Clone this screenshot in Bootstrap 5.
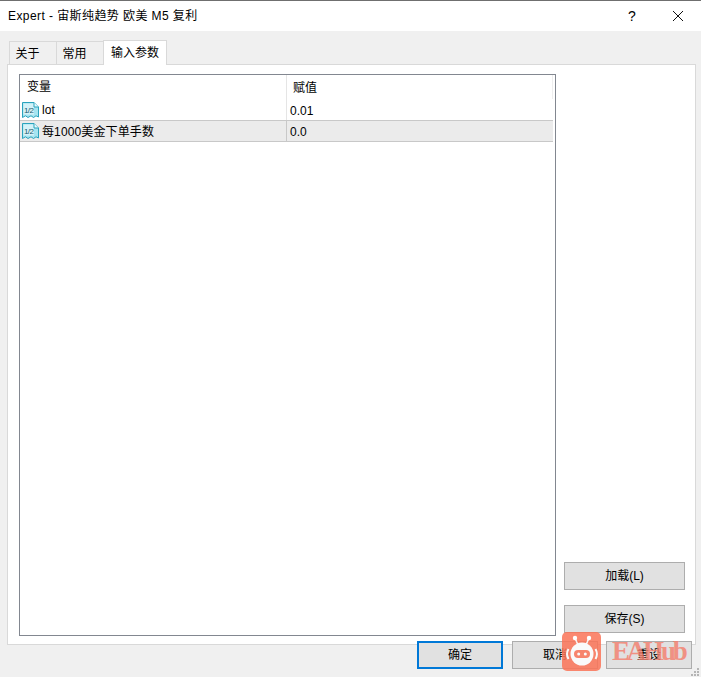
<!DOCTYPE html>
<html lang="zh">
<head>
<meta charset="utf-8">
<title>Expert</title>
<link href="https://cdn.jsdelivr.net/npm/bootstrap@5.3.0/dist/css/bootstrap.min.css" rel="stylesheet">
<style>
html,body{height:100%;margin:0}
body{background:#f0f0f0;font-family:"Liberation Sans","Noto Sans CJK SC",sans-serif;font-size:12px;color:#000;overflow:hidden}
.dlg{width:701px;height:677px;position:relative;border-top:1px solid #6f6f6f}
.titlebar{height:30px;background:#fff;padding-left:8px;font-size:12px;line-height:30px}
.titlebar .ttl{flex:1;letter-spacing:.42px}
.tbtn{width:46px;height:30px;display:flex;align-items:center;justify-content:center;font-size:14px}
.tabstrip{height:33px;padding:9px 0 0 9px;align-items:flex-end}
.tabi{width:48px;height:23px;background:#f0f0f0;border:1px solid #d9d9d9;border-bottom:0;text-align:center;line-height:24px;padding-right:11px;margin-right:-1px}
.tabi.cur{width:64px;height:25px;background:#fff;line-height:24px;padding-right:0;position:relative;z-index:2;margin-bottom:-1px}
.pane{margin-left:7px;width:689px;height:581px;background:#fff;border:1px solid #d9d9d9;padding:9px 0 0 11px}
.plist{width:537px;height:562px;border:1px solid #828790;background:#fff;flex:none}
.hrow{height:24px;line-height:26px}
.drow{height:21px;line-height:21px;width:533px}
.drow.sel{background:#ebebeb;border-top:1px solid #c8c8c8;border-bottom:1px solid #c8c8c8;height:22px;line-height:20px}
.c1{width:266px;flex:none;display:flex;align-items:center;padding-left:2px;letter-spacing:.12px}
.c2{flex:1;padding-left:3px;border-left:1px solid #e5e5e5}
.drow .c1,.drow .c2{padding-top:2px}
.drow.sel .c1,.drow.sel .c2{padding-top:1px}
.sel .c2{border-left-color:#c8c8c8}
.hrow .c1{padding-left:7px}
.hrow .c2{padding-left:6px;border-left-color:#e5e5e5}
.hrow{width:533px;border-right:1px solid #eee}
.vic{width:17px;height:17px;margin-right:3px;flex:none}
.side{width:121px;margin-left:8px;height:559px;gap:15px}
.wbtn{background:#e1e1e1;border:1px solid #adadad;border-radius:0;padding:0;color:#000;font-size:12px;height:28px;line-height:26px;display:block}
.wbtn:hover{background:#e1e1e1;border-color:#adadad;color:#000}
.side .wbtn{width:121px}
.foot{margin-top:-4px;padding-left:417px;gap:8px;position:relative;z-index:1}
.foot .wbtn{width:86px}
.foot .wbtn.pri{border:2px solid #0078d7;line-height:24px;margin-right:1px}
.wmark{position:absolute;left:562px;top:631px;display:flex;align-items:center;z-index:5;opacity:.85}
.wtext{font-family:"Liberation Serif",serif;font-weight:700;font-size:27px;color:#f4806e;margin-left:11px;letter-spacing:-3.200px;line-height:39px;opacity:.95}
.grip{position:absolute;right:2px;bottom:1px}
</style>
</head>
<body>
<div class="dlg">
  <svg width="0" height="0" class="d-block">
    <defs>
      <symbol id="vicon" viewBox="0 0 17 17">
        <path d="M.5.500H12L16.500 5V15L14 13.800L11.500 15.500L9 13.800L6 15.500L3.500 13.800L.5 15.500Z" fill="#a6e4f0" stroke="#2aa3bd"/>
        <rect x="1.500" y="1.500" width="10.500" height="11" fill="#d4f2f8"/>
        <path d="M12 .5V5H16.500" fill="#eafafd" stroke="#2aa3bd"/>
        <text x="2" y="10.500" font-size="8" font-family="Liberation Sans" letter-spacing="-.6" fill="#17586c">1/2</text>
      </symbol>
    </defs>
  </svg>
  <div class="titlebar d-flex">
    <div class="ttl">Expert - 宙斯纯趋势 欧美 M5 复利</div>
    <div class="tbtn">?</div>
    <div class="tbtn"><svg width="12" height="12" viewBox="0 0 12 12"><path d="M1 1L11 11M11 1L1 11" stroke="#111" stroke-width="1" fill="none"/></svg></div>
  </div>
  <div class="tabstrip d-flex">
    <div class="tabi">关于</div>
    <div class="tabi">常用</div>
    <div class="tabi cur">输入参数</div>
  </div>
  <div class="pane d-flex">
    <div class="plist">
      <div class="hrow d-flex"><div class="c1">变量</div><div class="c2">赋值</div></div>
      <div class="drow d-flex">
        <div class="c1"><svg class="vic"><use href="#vicon"/></svg>lot</div>
        <div class="c2">0.01</div>
      </div>
      <div class="drow sel d-flex">
        <div class="c1"><svg class="vic"><use href="#vicon"/></svg>每1000美金下单手数</div>
        <div class="c2">0.0</div>
      </div>
    </div>
    <div class="side d-flex flex-column justify-content-end">
      <button type="button" class="btn wbtn">加载(L)</button>
      <button type="button" class="btn wbtn">保存(S)</button>
    </div>
  </div>
  <div class="foot d-flex">
    <button type="button" class="btn wbtn pri">确定</button>
    <button type="button" class="btn wbtn">取消</button>
    <button type="button" class="btn wbtn">重设</button>
  </div>
  <div class="wmark">
    <svg width="39" height="39" viewBox="0 0 39 39">
      <rect width="39" height="39" rx="5" fill="#fb7458"/>
      <path d="M16 13L13 6M24 13L27 6" stroke="#fff" stroke-width="1.500"/>
      <circle cx="13" cy="6" r="2.200" fill="#fff"/><circle cx="27" cy="6" r="2.200" fill="#fff"/>
      <path d="M6.500 17Q3.500 22 6.500 27M33.500 17Q36.500 22 33.500 27" stroke="#fff" stroke-width="2" fill="none"/>
      <circle cx="20" cy="22" r="11.500" fill="#fff"/>
      <rect x="12" y="18" width="16" height="8" rx="4" fill="#fb7458"/>
      <circle cx="16.700" cy="22" r="1.500" fill="#fff"/><circle cx="23.300" cy="22" r="1.500" fill="#fff"/>
    </svg>
    <span class="wtext">EAHub</span>
  </div>
  <svg class="grip" width="8" height="8" viewBox="0 0 8 8" fill="#b5b5b5">
    <rect x="6" y="0" width="2" height="2"/><rect x="3" y="3" width="2" height="2"/><rect x="6" y="3" width="2" height="2"/><rect x="0" y="6" width="2" height="2"/><rect x="3" y="6" width="2" height="2"/><rect x="6" y="6" width="2" height="2"/>
  </svg>
</div>
</body>
</html>
